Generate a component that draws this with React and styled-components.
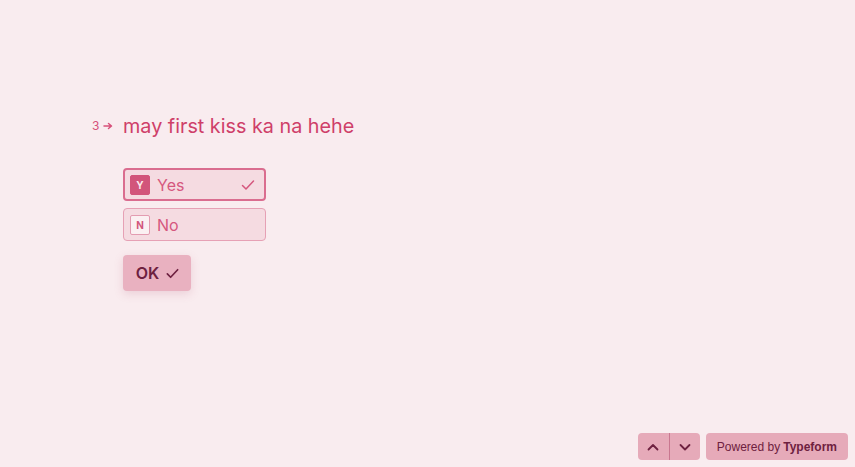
import styled, { createGlobalStyle } from "styled-components";

const GlobalStyle = createGlobalStyle`
  html, body {
    margin: 0;
    padding: 0;
    background: #f9ecef;
  }
  body {
    font-family: "Inter", "Liberation Sans", sans-serif;
  }
`;

const Page = styled.div`
  width: 855px;
  height: 467px;
  position: relative;
  background: #f9ecef;
  overflow: hidden;
`;

const Question = styled.div`
  padding: 114px 0 0 92px;
`;

const TitleRow = styled.div`
  display: flex;
  align-items: center;
`;

const Number = styled.div`
  width: 31px;
  display: flex;
  align-items: center;
  gap: 4px;
  color: #d7507a;
  font-size: 12px;
  margin-top: -1px;
`;

const Title = styled.h1`
  margin: 0;
  font-size: 19.8px;
  font-weight: 400;
  color: #cf3f69;
`;

const Choices = styled.div`
  margin: 30px 0 0 31px;
  display: flex;
  flex-direction: column;
  gap: 7px;
  width: 143px;
`;

const Choice = styled.div`
  box-sizing: border-box;
  height: 33px;
  display: flex;
  align-items: center;
  padding: 0 8px 0 6px;
  border-radius: 4px;
  background: #f5dbe1;
  border: ${(p) => (p.$selected ? "2px solid #da6d8f" : "1px solid #e6a1b5")};
  padding-left: ${(p) => (p.$selected ? "5px" : "6px")};
  color: #d5577e;
  font-size: 16px;
`;

const Key = styled.span`
  box-sizing: border-box;
  width: 20px;
  height: 20px;
  display: flex;
  align-items: center;
  justify-content: center;
  font-size: 10px;
  font-weight: 700;
  border-radius: 2px;
  margin-right: 7px;
  background: ${(p) => (p.$selected ? "#d2557b" : "#fbf0f2")};
  color: ${(p) => (p.$selected ? "#fbe9ee" : "#d2557b")};
  border: 1px solid ${(p) => (p.$selected ? "#d2557b" : "#e39cb1")};
`;

const Label = styled.span`
  flex: 1;
`;

const OkButton = styled.button`
  margin: 14px 0 0 31px;
  width: 68px;
  height: 36px;
  border: none;
  border-radius: 4px;
  background: #e9b1c0;
  color: #6e2140;
  font-family: inherit;
  font-size: 16px;
  font-weight: 600;
  display: flex;
  align-items: center;
  justify-content: center;
  gap: 6px;
  box-shadow: 0 3px 10px rgba(180, 80, 110, 0.18);
  padding: 0 0 0 2px;
`;

const Footer = styled.div`
  position: absolute;
  right: 7px;
  bottom: 7px;
  display: flex;
  gap: 6px;
`;

const NavGroup = styled.div`
  display: flex;
  border-radius: 4px;
  overflow: hidden;
  background: #e6aab9;
`;

const NavButton = styled.button`
  width: 31px;
  height: 27px;
  border: none;
  padding: 0;
  background: transparent;
  display: flex;
  align-items: center;
  justify-content: center;
  & + & {
    border-left: 1px solid #c97790;
  }
`;

const Powered = styled.div`
  height: 27px;
  padding: 0 11px;
  border-radius: 4px;
  background: #e6aab9;
  color: #6e2140;
  font-family: "Liberation Sans", Arial, sans-serif;
  font-size: 12px;
  display: flex;
  align-items: center;
  gap: 3px;
  b {
    font-weight: 700;
  }
`;

const Check = ({ size = 14, color = "currentColor", width = 1.8 }) => (
  <svg width={size} height={size} viewBox="0 0 16 16" fill="none">
    <path d="M2.5 8.5 L6 12 L13.5 4" stroke={color} strokeWidth={width} strokeLinecap="round" strokeLinejoin="round" />
  </svg>
);

const Chevron = ({ up }) => (
  <svg width="14" height="14" viewBox="0 0 14 14" fill="none">
    <path
      d={up ? "M2.5 9.5 L7 5 L11.5 9.5" : "M2.5 5 L7 9.5 L11.5 5"}
      stroke="#6e2140"
      strokeWidth="1.8"
      strokeLinecap="round"
      strokeLinejoin="round"
    />
  </svg>
);

function App() {
  return (
    <Page>
      <GlobalStyle />
      <Question>
        <TitleRow>
          <Number>
            3
            <svg width="10" height="8" viewBox="0 0 10 8" fill="none">
              <path d="M1 4 H8 M5.5 1.5 L8.5 4 L5.5 6.5" stroke="#d7507a" strokeWidth="1.5" strokeLinecap="round" strokeLinejoin="round" />
            </svg>
          </Number>
          <Title>may first kiss ka na hehe</Title>
        </TitleRow>
        <Choices>
          <Choice $selected>
            <Key $selected>Y</Key>
            <Label>Yes</Label>
            <Check size={16} color="#d5577e" width={1.5} />
          </Choice>
          <Choice>
            <Key>N</Key>
            <Label>No</Label>
          </Choice>
        </Choices>
        <OkButton>
          OK
          <Check size={15} color="#6e2140" width={1.8} />
        </OkButton>
      </Question>
      <Footer>
        <NavGroup>
          <NavButton><Chevron up /></NavButton>
          <NavButton><Chevron /></NavButton>
        </NavGroup>
        <Powered>
          Powered by <b>Typeform</b>
        </Powered>
      </Footer>
    </Page>
  );
}

export default App;
